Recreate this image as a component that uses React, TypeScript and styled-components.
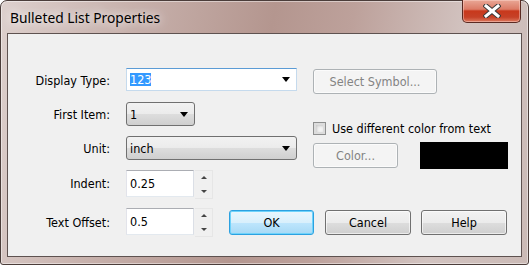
import React from 'react';
import styled, { createGlobalStyle } from 'styled-components';

const GlobalStyle = createGlobalStyle`
  html, body {
    margin: 0;
    padding: 0;
    background: #ffffff;
  }
  body {
    font-family: "DejaVu Sans Condensed", "DejaVu Sans", sans-serif;
    font-size: 12.5px;
    color: #000;
  }
  * {
    box-sizing: border-box;
  }
`;

const Window = styled.div`
  width: 529px;
  height: 265px;
  display: flex;
  flex-direction: column;
  padding: 0 6px 7px;
  border: 1px solid #4b3d3a;
  border-radius: 7px 7px 3px 3px;
  background: linear-gradient(100deg, #ddd0cd 0%, #c8b2ad 22%, #b4968f 48%, #bda19b 62%, #d2c3c0 82%, #cbbab6 100%);
  box-shadow: inset 0 0 0 1px rgba(255, 255, 255, 0.45);
`;

const TitleBar = styled.div`
  height: 32px;
  display: flex;
  justify-content: space-between;
  align-items: flex-start;
`;

const Title = styled.div`
  padding: 7px 0 0 3px;
  font-family: "Noto Sans", "Open Sans", sans-serif;
  font-size: 13.8px;
  line-height: 20px;
  color: #000;
  text-shadow: 0 0 8px rgba(255, 255, 255, 0.9), 0 0 14px rgba(255, 255, 255, 0.7);
`;

const CloseButton = styled.div`
  width: 59px;
  height: 23px;
  margin: -1px 1px 0 0;
  display: flex;
  align-items: center;
  justify-content: center;
  border: 1px solid #5a2a22;
  border-top: none;
  border-radius: 0 0 5px 5px;
  background: linear-gradient(#e9a796 0%, #dc7b66 42%, #c8381c 50%, #c64127 78%, #dd7a5f 100%);
  box-shadow: inset 0 0 0 1px rgba(255, 220, 210, 0.45);
`;

const Client = styled.div`
  flex: 1;
  display: flex;
  flex-direction: column;
  padding-top: 34px;
  background: #f0f0f0;
  border: 1px solid #5e5250;
`;

const Top = styled.div`
  display: flex;
  gap: 16px;
`;

const Form = styled.div`
  display: grid;
  grid-template-columns: 102px 171px;
  grid-template-rows: 24px 24px 24px 27px;
  column-gap: 16px;
  row-gap: 10px;
`;

const Label = styled.div`
  display: flex;
  align-items: center;
  justify-content: flex-end;
  height: 100%;
`;

const Combo = styled.div<{ $width: number; $height?: number }>`
  width: ${(p) => p.$width}px;
  height: ${(p) => p.$height ?? 24}px;
  display: flex;
  align-items: center;
  justify-content: space-between;
  padding: 0 6px 0 3px;
  border: 1px solid #707070;
  border-radius: 3px;
  background: linear-gradient(#f2f2f2 0%, #ebebeb 50%, #dddddd 51%, #cfcfcf 100%);
`;

const EditCombo = styled(Combo)`
  border-radius: 0;
  border-color: #c5daed;
  border-top-color: #5b9bd5;
  background: #ffffff;
`;

const Selected = styled.span`
  background: #3399ff;
  color: #ffffff;
  line-height: 13px;
`;

const Arrow = styled.span`
  width: 0;
  height: 0;
  border-left: 4.5px solid transparent;
  border-right: 4.5px solid transparent;
  border-top: 5px solid #000;
`;

const Spin = styled.div`
  display: flex;
  gap: 1px;
`;

const SpinInput = styled.div`
  width: 68px;
  height: 27px;
  display: flex;
  align-items: center;
  padding-left: 3px;
  background: #ffffff;
  border: 1px solid #e3e9ef;
  border-top-color: #abadb3;
  border-left-color: #e2e3ea;
  border-right-color: #dbdfe6;
`;

const SpinButtons = styled.div`
  width: 18px;
  height: 29px;
  display: flex;
  flex-direction: column;
  border: 1px solid #e6e6e6;
  border-left: none;
`;

const SpinHalf = styled.div<{ $down?: boolean }>`
  flex: 1;
  display: flex;
  align-items: center;
  justify-content: center;

  &::after {
    content: '';
    border-left: 3px solid transparent;
    border-right: 3px solid transparent;
    ${(p) => (p.$down ? 'border-top: 3px solid #444;' : 'border-bottom: 3px solid #444;')}
  }
`;

const Side = styled.div`
  display: flex;
  flex-direction: column;
  padding-top: 1px;
`;

const Button = styled.div<{ $width: number; $disabled?: boolean; $default?: boolean }>`
  width: ${(p) => p.$width}px;
  height: 25px;
  display: flex;
  align-items: center;
  justify-content: center;
  margin-right: ${(p) => (p.$default ? 1 : 0)}px;
  border: 1px solid ${(p) => (p.$disabled ? '#adb2b5' : p.$default ? '#2ca1e0' : '#707070')};
  border-radius: 3px;
  color: ${(p) => (p.$disabled ? '#838383' : '#000')};
  background: ${(p) =>
    p.$disabled
      ? '#f4f4f4'
      : p.$default
      ? 'linear-gradient(#eaf6fd 0%, #d9f0fc 50%, #bee6fd 51%, #a7d9f5 100%)'
      : 'linear-gradient(#f2f2f2 0%, #ebebeb 50%, #dddddd 51%, #cfcfcf 100%)'};
  box-shadow: ${(p) => (p.$default ? 'inset 0 0 0 1px #6fd3fb' : 'inset 0 0 0 1px rgba(255,255,255,0.6)')};
`;

const CheckRow = styled.div`
  margin-top: 27px;
  height: 14px;
  display: flex;
  align-items: center;
  gap: 6px;
`;

const Checkbox = styled.div`
  width: 13px;
  height: 13px;
  border: 1px solid #8e8f8f;
  background: #f4f4f4;
  box-shadow: inset 0 0 0 2px #dcdcdc, inset 1px 1px 3px 2px #c8c8c8;
`;

const ColorRow = styled.div`
  margin-top: 7px;
  display: flex;
  align-items: center;
  gap: 22px;
`;

const Swatch = styled.div`
  width: 88px;
  height: 27px;
  background: #000;
`;

const Bottom = styled.div`
  margin-top: 11px;
  display: flex;
  align-items: center;
`;

const BottomLabel = styled(Label)`
  width: 102px;
  height: 27px;
  margin-right: 16px;
`;

const Buttons = styled.div`
  margin-left: 16px;
  display: flex;
  gap: 10px;
`;

const SpinBox: React.FC<{ value: string }> = ({ value }) => (
  <Spin>
    <SpinInput>{value}</SpinInput>
    <SpinButtons>
      <SpinHalf />
      <SpinHalf $down />
    </SpinButtons>
  </Spin>
);

const CloseGlyph = () => (
  <svg width="18" height="14" viewBox="0 0 18 14">
    <path d="M3 2 L15 12 M15 2 L3 12" stroke="#3a3a3a" strokeWidth="5" strokeLinecap="square" />
    <path d="M3 2 L15 12 M15 2 L3 12" stroke="#ffffff" strokeWidth="3" strokeLinecap="square" />
  </svg>
);

const App: React.FC = () => {
  return (
    <>
      <GlobalStyle />
      <Window>
        <TitleBar>
          <Title>Bulleted List Properties</Title>
          <CloseButton>
            <CloseGlyph />
          </CloseButton>
        </TitleBar>
        <Client>
          <Top>
            <Form>
              <Label>Display Type:</Label>
              <EditCombo $width={171} $height={23}>
                <Selected>123</Selected>
                <Arrow />
              </EditCombo>

              <Label>First Item:</Label>
              <Combo $width={69}>
                <span>1</span>
                <Arrow />
              </Combo>

              <Label>Unit:</Label>
              <Combo $width={171}>
                <span>inch</span>
                <Arrow />
              </Combo>

              <Label>Indent:</Label>
              <SpinBox value="0.25" />
            </Form>

            <Side>
              <Button $width={124} $disabled>Select Symbol...</Button>
              <CheckRow>
                <Checkbox />
                <span>Use different color from text</span>
              </CheckRow>
              <ColorRow>
                <Button $width={85} $disabled>Color...</Button>
                <Swatch />
              </ColorRow>
            </Side>
          </Top>

          <Bottom>
            <BottomLabel>Text Offset:</BottomLabel>
            <SpinBox value="0.5" />
            <Buttons>
              <Button $width={85} $default>OK</Button>
              <Button $width={86}>Cancel</Button>
              <Button $width={86}>Help</Button>
            </Buttons>
          </Bottom>
        </Client>
      </Window>
    </>
  );
};

export default App;
